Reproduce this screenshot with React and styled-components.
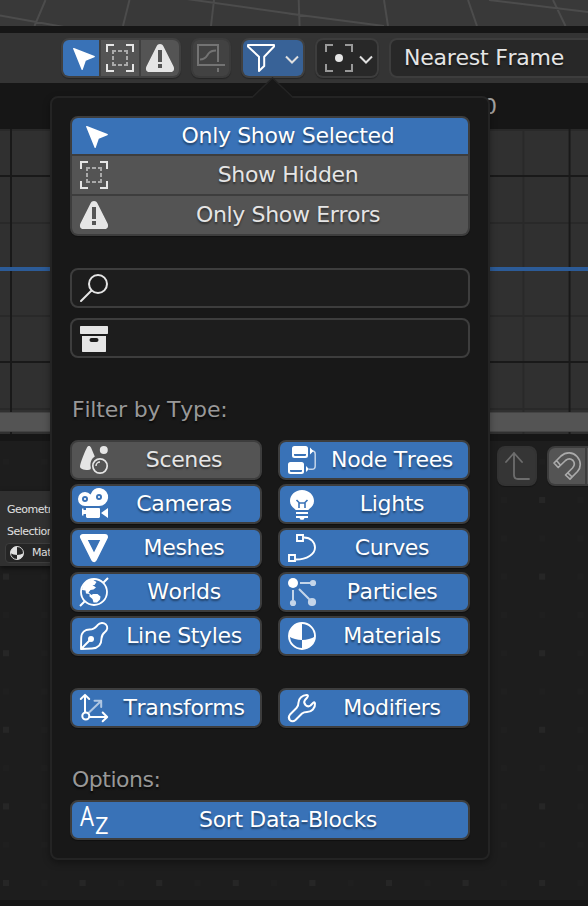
import styled, { createGlobalStyle } from "styled-components";

const GlobalStyle = createGlobalStyle`
  * {
    box-sizing: border-box;
  }
  body {
    margin: 0;
    background: #1d1d1d;
    font-family: "DejaVu Sans", sans-serif;
    font-size: 22px;
    font-kerning: none;
    letter-spacing: -0.35px;
    overflow: hidden;
  }
`

const Page = styled.div`
  position: relative;
  display: flex;
  flex-direction: column;
  width: 588px;
  height: 906px;
  overflow: hidden;
  background: #161616;
`

const Viewport = styled.div`
  height: 26px;
  margin-bottom: 7px;
  background: #393939;
  overflow: hidden;
  svg {
    display: block;
  }
`

const Header = styled.div`
  display: flex;
  align-items: flex-start;
  height: 50px;
  padding: 5px 0 0 61px;
  background: #343434;
`

const Ruler = styled.div`
  height: 46px;
  padding: 10px 0 0 483px;
  background: #161616;
  color: #a3a3a3;
  line-height: 28px;
`

const Graph = styled.div`
  display: flex;
  flex-direction: column;
  justify-content: space-between;
  height: 305px;
  margin-bottom: 7px;
  padding: 138px 0 2px;
  background-color: #303030;
  background-image:
    linear-gradient(#191919 2px, transparent 2px),
    linear-gradient(90deg, #191919 2px, transparent 2px),
    linear-gradient(#292929 2px, transparent 2px),
    linear-gradient(90deg, #292929 2px, transparent 2px);
  background-size: 100% 93px, 93.1px 100%, 100% 93px, 93.1px 100%;
  background-position: 0 46px, 10px 0, 0 0, 57px 0;
`

const Playline = styled.div`
  height: 4px;
  background: #2c5b97;
`

const Scrollbar = styled.div`
  height: 20px;
  border: solid #444;
  border-width: 1px 0;
  background: #545454;
`

const NodeEditor = styled.div`
  display: flex;
  justify-content: space-between;
  align-items: flex-start;
  height: 459px;
  padding-top: 5px;
  background-color: #1d1d1d;
  background-image:
    conic-gradient(from 90deg at 70.6px 70.6px, #262626 90deg, transparent 0),
    conic-gradient(from 90deg at 32.3px 32.3px, #1f1f1f 90deg, transparent 0);
  background-size: 76.6px 76.6px, 38.3px 38.3px;
  background-position: 9px 62px, 9px 62px;
`

const NodeCard = styled.div`
  width: 120px;
  height: 75px;
  margin-top: 45px;
  padding: 8px 0 0 5px;
  background: #303030;
  box-shadow: 0 2px 5px rgba(0, 0, 0, 0.5);
  color: #e0e0e0;
  font-size: 11px;
  line-height: 22px;
  letter-spacing: -0.5px;
  white-space: nowrap;
`

const NodeText = styled.div`
  padding-left: 2px;
`

const NodeField = styled.div`
  display: flex;
  align-items: center;
  gap: 8px;
  height: 20px;
  padding-left: 4px;
  border: 1px solid #3d3d3d;
  border-radius: 4px;
  background: #252525;
`

const NodeTools = styled.div`
  display: flex;
  align-items: flex-start;
  gap: 10px;
  width: 91px;
`

const Group = styled.div`
  display: flex;
  flex: none;
  flex-direction: ${(p) => (p.$column ? "column" : "row")};
  gap: 2px;
  margin-right: ${(p) => p.$after || 0}px;
  border: 2px solid ${(p) => p.$border || "#3d3d3d"};
  border-radius: 8px;
  background: ${(p) => p.$border || "#3d3d3d"};
  box-shadow: 0 1px 1px rgba(0, 0, 0, 0.3);
  overflow: hidden;
`

const Segment = styled.div`
  display: flex;
  align-items: center;
  justify-content: center;
  gap: ${(p) => p.$gap || 10}px;
  width: ${(p) => p.$width}px;
  height: 36px;
  padding-left: ${(p) => p.$indent || 0}px;
  background: ${(p) => p.$bg || "#545454"};
  color: ${(p) => p.$color || "#e5e5e5"};
`

const FrameSelect = styled.div`
  flex: none;
  width: 240px;
  height: 40px;
  padding-left: 13px;
  border: 2px solid #3d3d3d;
  border-radius: 8px;
  background: #282828;
  color: #e5e5e5;
  line-height: 36px;
  letter-spacing: -0.25px;
  text-shadow: 0 2px 2px rgba(0, 0, 0, 0.5);
`

const Popover = styled.div`
  position: absolute;
  left: 50px;
  top: 96px;
  width: 440px;
  height: 764px;
  padding: 18px;
  border: 2px solid #242424;
  border-radius: 8px;
  background: #181818;
  box-shadow: 0 3px 7px rgba(0, 0, 0, 0.35);
`

const Arrow = styled.svg`
  position: absolute;
  left: 200px;
  top: -21px;
`

const Row = styled.div`
  display: flex;
  align-items: center;
  width: 100%;
  height: ${(p) => p.$height || 38}px;
  padding-left: 8px;
  background: ${(p) => (p.$on ? "#3972b7" : "#545454")};
  color: ${(p) => (p.$on ? "#fff" : "#e5e5e5")};
`

const Toggle = styled(Row)`
  height: 40px;
  border: 2px solid #3d3d3d;
  border-radius: 8px;
  box-shadow: 0 1px 1px rgba(0, 0, 0, 0.4);
`

const Caption = styled.span`
  flex: 1;
  text-align: center;
  line-height: 36px;
  white-space: nowrap;
  text-shadow: 0 2px 2px rgba(0, 0, 0, 0.45);
`

const Field = styled.div`
  display: flex;
  align-items: center;
  height: 40px;
  margin-top: ${(p) => p.$before}px;
  padding-left: 8px;
  border: 2px solid #3d3d3d;
  border-radius: 8px;
  background: #1d1d1d;
  color: #e5e5e5;
`

const Label = styled.div`
  height: 40px;
  margin-top: 32px;
  padding-left: 2px;
  color: #989898;
  line-height: 40px;
  letter-spacing: ${(p) => p.$spacing || 0}px;
  text-shadow: 0 2px 2px rgba(0, 0, 0, 0.7);
`

const Grid = styled.div`
  display: grid;
  grid-template-columns: 1fr 1fr;
  gap: 4px 16px;
  margin-top: ${(p) => p.$before}px;
`

const IconSvg = styled.svg`
  flex: none;
  display: block;
  overflow: visible;
`

const Icon = ({ children, size = 28, line }) => (
  <IconSvg
    width={size}
    height={size}
    viewBox="0 0 28 28"
    fill={line ? "none" : "currentColor"}
    stroke={line ? "currentColor" : "none"}
    strokeWidth="2"
    strokeLinecap={line === "round" ? "round" : "butt"}
    strokeLinejoin={line === "round" ? "round" : "miter"}
  >
    {children}
  </IconSvg>
)

const CursorIcon = () => (
  <Icon>
    <path d="M6 4.6Q6 3.7 7 4L27.6 12Q28.4 12.8 27.4 13.3L18.8 16.8L15.8 25.6Q15.1 26.6 14.5 25.6Z" />
  </Icon>
)

const corners = "M8 1H1V8M20 1H27V8M8 27H1V20M20 27H27V20"

const HiddenIcon = () => (
  <Icon line>
    <path d={corners} />
    <path d="M6 7H22M6 21H22M7 6V22M21 6V22" strokeDasharray="4 2" opacity=".6" />
  </Icon>
)

const ErrorIcon = () => (
  <Icon>
    <path
      fillRule="evenodd"
      d="M14 0C15.500 0 16.700 .8 17.400 2.200L27.600 22.500C28.800 25.500 27.500 28 25 28H3C.5 28-.8 25.500 .4 22.500L10.600 2.200C11.300 .8 12.500 0 14 0ZM12 6V18H16V6ZM12 20V24H16V20Z"
    />
  </Icon>
)

const NormalizeIcon = () => (
  <Icon line>
    <path d="M21 18V1H1V21H28M21 24V28M3 15.500C9 15.500 9.500 12 11.500 9.500C13.500 7 15 6.500 19 6.500" />
  </Icon>
)

const FunnelIcon = () => (
  <Icon line="round">
    <path d="M1 1H27V2.500L17.200 12.800V22L12 27V12.800L1 2.500Z" />
  </Icon>
)

const PivotIcon = () => (
  <Icon line>
    <path d={corners} opacity=".6" />
    <circle cx="14" cy="14" r="4" fill="currentColor" stroke="none" />
  </Icon>
)

const Chevron = () => (
  <IconSvg width="14" height="9" viewBox="0 0 14 9" fill="none" stroke="#e0e0e0" strokeWidth="2">
    <path d="M1 2.500L7 8.500L13 2.500" />
  </IconSvg>
)

const SearchIcon = () => (
  <Icon line="round">
    <circle cx="18" cy="10" r="9" />
    <path d="M11.500 16.500L1 27" />
  </Icon>
)

const ArchiveIcon = () => (
  <Icon>
    <path
      fillRule="evenodd"
      d="M.6 2H27.400L28 2.600V9.400L27.400 10H.6L0 9.400V2.600ZM2 12H26V27.500L25.500 28H2.500L2 27.500ZM11.500 14A2 2 0 0 0 11.500 18H16.500A2 2 0 0 0 16.500 14Z"
    />
  </Icon>
)

const SceneIcon = () => (
  <Icon>
    <path d="M9 0C10 0 10.500 .6 11 1.500L14.800 10.500C11.200 12.800 9.800 17 10.800 21.500C11 23.300 10 24 8 24C3 24 0 22.500 0 20.500C0 17.500 5.500 4 7 1.500C7.500 .5 8 0 9 0Z" />
    <circle cx="23.800" cy="4" r="4" />
    <circle cx="20" cy="20" r="7.200" fill="none" stroke="currentColor" strokeWidth="1.700" />
    <path d="M16 20A4 4 0 0 1 20 16" fill="none" stroke="currentColor" strokeWidth="1.500" />
  </Icon>
)

const CameraIcon = () => (
  <Icon>
    <path
      fillRule="evenodd"
      d="M5 2A7 7 0 0 1 10.500 4.500A9 9 0 1 1 19 16H5A7 7 0 0 1 5 2ZM5 6A3 3 0 0 0 5 12A3 3 0 0 0 5 6ZM19 4A3 3 0 0 0 19 10A3 3 0 0 0 19 4Z"
    />
    <circle cx="5" cy="9" r="1.100" />
    <circle cx="19" cy="7" r="1.100" />
    <path d="M7 18H19Q20 18 20 19V27L19 28H7L6 27V24H3.500V25.500H2V18.500H3.500V20H6V18ZM28 18V28L21 23Z" />
  </Icon>
)

const MeshIcon = () => (
  <Icon line="round">
    <path d="M3 3H25L14 25Z" strokeWidth="6" />
  </Icon>
)

const WorldIcon = () => (
  <Icon>
    <circle cx="14" cy="14" r="13" fill="none" stroke="currentColor" strokeWidth="1.800" />
    <path d="M0 28L4.500 23.500M23.500 4.500L28 0" stroke="currentColor" strokeWidth="2" />
    <path d="M2.500 9C5 3.500 8 2 13 1.800L16.500 4L14.500 7H12.500L16 9.500L13.500 11.500L10.500 12L8.500 14.500L11.500 17L13 16H17.500L20.500 18.500L20 21.500L17 24.500H13.500L12.500 21L9.500 18.500V16L6 15.500L5.500 12.500L2 12Z" />
  </Icon>
)

const PenIcon = () => (
  <Icon line="round">
    <path d="M1 27L1.200 16C1.300 10 5.500 7.500 9.500 7.500C14 7.500 15.500 5.500 17.500 3.200C20 .5 23.500 .2 25.800 2.400C28.200 5 27.500 8 25 10C22.500 12 21.500 13.500 21.500 16.500C21.500 23 18 26.200 12 26.500ZM1 27L10 18" strokeWidth="1.900" />
    <circle cx="11" cy="17" r="3" fill="currentColor" stroke="none" />
  </Icon>
)

const NodeTreeIcon = () => (
  <Icon>
    <path
      fillRule="evenodd"
      d="M6.500 0H17.500Q20 0 20 2.500V9.500Q20 12 17.500 12H6.500Q4 12 4 9.500V2.500Q4 0 6.500 0ZM6 8V9Q6 10 7 10H17Q18 10 18 9V8ZM2.500 16H13.500Q16 16 16 18.500V25.500Q16 28 13.500 28H2.500Q0 28 0 25.500V18.500Q0 16 2.500 16ZM2 24V25Q2 26 3 26H13Q14 26 14 25V24Z"
    />
    <path d="M22 1.500L25.500 5L22 8.500ZM18 20L21 23L18 26Z" />
    <path d="M24.500 5Q27.200 5 27.200 8V20Q27.200 23.300 24 23.300H21" fill="none" stroke="currentColor" strokeWidth="1.500" opacity=".7" />
  </Icon>
)

const LightIcon = () => (
  <Icon>
    <path d="M14 0C21 0 26 5 26 11C26 14.500 24 17 21.500 18.800Q20.500 20 20 20H8Q7.500 20 6.500 18.800C4 17 2 14.500 2 11C2 5 7 0 14 0Z" />
    <path d="M8.500 10L11 12.500V18M19.500 10L17 12.500V18M10.500 13H17.500" fill="none" stroke="#3972b7" strokeWidth="1.600" />
    <path d="M8 22H20V24H8ZM8 26H20V28H16.500L15.500 29.800H12.500L11.500 28H8Z" />
  </Icon>
)

const CurveIcon = () => (
  <Icon line>
    <path d="M9 1H15V7H9ZM1 21H7V27H1ZM16 3.500C23 3.500 27 8.500 27 13.500C27 20 19 25.500 8 25.500" strokeWidth="1.900" />
  </Icon>
)

const ParticleIcon = () => (
  <Icon>
    <circle cx="5" cy="5" r="5" />
    <g opacity=".7">
      <circle cx="25" cy="5" r="3.100" />
      <circle cx="5" cy="25" r="3.100" />
      <circle cx="24" cy="24" r="4.100" />
      <path d="M12 4H22V6H12ZM4 12H6V22H4ZM11.700 10.300L22 20.500L20.500 22L10.300 11.700Z" />
    </g>
  </Icon>
)

const MaterialIcon = ({ size }) => (
  <Icon size={size}>
    <circle cx="14" cy="14" r="13" fill="none" stroke="currentColor" strokeWidth="1.900" />
    <path d="M14 1V18Q6.500 17.800 1 14.500A13 13 0 0 1 14 1ZM14 18Q21.500 17.800 27 14.500A13 13 0 0 1 14 27Z" />
  </Icon>
)

const TransformIcon = () => (
  <Icon line="round">
    <path d="M5 18V1M.8 5L5 .9L9.200 5M9.500 23H27M22.700 18.500L27.200 23L22.700 27.300" />
    <circle cx="5.800" cy="22" r="3.500" />
    <path d="M9 18.500L21 7M14.500 6.800H21.200V13" opacity=".6" />
  </Icon>
)

const WrenchIcon = () => (
  <Icon line="round">
    <path d="M18.500 1C14.500 1 10.500 4.500 10.500 8.500C10.500 11.500 10 12.500 8.500 14L2 20.500C.5 22.500 .5 24.500 1.800 26C3.500 27.600 5.800 27.500 7.500 26L14 19.500C15.500 18.300 16.500 18 19 18C23.500 18 27.500 14 27 9.500C26.800 8 26 8 25 9L22.500 11.500C20.800 12.800 19 12.500 17.500 11C15.800 9 15.800 7.500 17 6L19.200 3.500C20.500 2 20 1 18.500 1Z" />
  </Icon>
)

const SortIcon = () => (
  <Icon>
    <g fontFamily="Open Sans, sans-serif" letterSpacing="0">
      <text x="0" y="20" fontSize="28" textLength="14" lengthAdjust="spacingAndGlyphs">A</text>
      <text x="15" y="28" fontSize="24" textLength="13.500" lengthAdjust="spacingAndGlyphs">Z</text>
    </g>
  </Icon>
)

const ParentIcon = () => (
  <Icon line="round">
    <path d="M3 10L11 1L19 10M11 1V23Q11 27 15 27H26" strokeWidth="1.800" />
  </Icon>
)

const MagnetIcon = () => (
  <Icon line="round">
    <path d="M1 11L8 4C13-.5 20 0 24 4.500C28.500 9.500 28 15.500 24.500 19.500L17 27.200L12.500 23L19.500 16C21.500 13.800 22 11 20 8.500C17.800 6.500 15 6.500 12.500 8.500L5.200 15.500ZM3.500 8.500L7.500 13.200M14.800 20.800L19.200 25" strokeWidth="1.700" />
  </Icon>
)

const types = [
  { name: "Scenes", icon: SceneIcon, off: true },
  { name: "Node Trees", icon: NodeTreeIcon },
  { name: "Cameras", icon: CameraIcon },
  { name: "Lights", icon: LightIcon },
  { name: "Meshes", icon: MeshIcon },
  { name: "Curves", icon: CurveIcon },
  { name: "Worlds", icon: WorldIcon },
  { name: "Particles", icon: ParticleIcon },
  { name: "Line Styles", icon: PenIcon },
  { name: "Materials", icon: MaterialIcon },
]

const extras = [
  { name: "Transforms", icon: TransformIcon },
  { name: "Modifiers", icon: WrenchIcon },
]

const ToggleGrid = ({ items, before }) => (
  <Grid $before={before}>
    {items.map(({ name, icon: Glyph, off }) => (
      <Toggle key={name} $on={!off}>
        <Glyph />
        <Caption>{name}</Caption>
      </Toggle>
    ))}
  </Grid>
)

const FilterPopover = () => (
  <Popover>
    <Arrow width="42" height="24" viewBox="0 0 42 24">
      <path d="M0 24L0 21L20.500 1L41 21V24Z" fill="#181818" />
      <path d="M0 20.500L20.500 1L41 20.500" fill="none" stroke="#242424" strokeWidth="1.500" />
    </Arrow>
    <Group $column>
      <Row $on $height={36}>
        <CursorIcon />
        <Caption>Only Show Selected</Caption>
      </Row>
      <Row>
        <HiddenIcon />
        <Caption>Show Hidden</Caption>
      </Row>
      <Row>
        <ErrorIcon />
        <Caption>Only Show Errors</Caption>
      </Row>
    </Group>
    <Field $before={32}>
      <SearchIcon />
    </Field>
    <Field $before={10}>
      <ArchiveIcon />
    </Field>
    <Label $spacing={-0.2}>Filter by Type:</Label>
    <ToggleGrid items={types} before={10} />
    <ToggleGrid items={extras} before={32} />
    <Label $spacing={-0.5}>Options:</Label>
    <Toggle $on>
      <SortIcon />
      <Caption>Sort Data-Blocks</Caption>
    </Toggle>
  </Popover>
)

const App = () => {
  return (
    <Page>
      <GlobalStyle />
      <Viewport>
        <svg width="588" height="26" stroke="#4c4c4c" strokeWidth="2">
          <path d="M45.500 0L34.500 26M0 15.500L64 27M129.500 0L123 26M214 0L211 26M187-1L300 15M298.700 0L299.600 26M288 13.500L384 26M384 0L388 26M468 0L477 26M489 0L588 12M553 0L565.500 26" />
        </svg>
      </Viewport>
      <Header>
        <Group $after={10} $border="#404040">
          <Segment $width={36} $bg="#3972b7" $color="#fff"><CursorIcon /></Segment>
          <Segment $width={38}><HiddenIcon /></Segment>
          <Segment $width={38}><ErrorIcon /></Segment>
        </Group>
        <Group $after={10} $border="#3b3b3b">
          <Segment $width={36} $bg="#424242" $color="#737373"><NormalizeIcon /></Segment>
        </Group>
        <Group $after={10} $border="#404040">
          <Segment $width={60} $bg="#386297" $color="#fff"><FunnelIcon /><Chevron /></Segment>
        </Group>
        <Group $after={10}>
          <Segment $width={60} $bg="#282828" $gap={6} $indent={4}><PivotIcon /><Chevron /></Segment>
        </Group>
        <FrameSelect>Nearest Frame</FrameSelect>
      </Header>
      <Ruler>0</Ruler>
      <Graph>
        <Playline />
        <Scrollbar />
      </Graph>
      <NodeEditor>
        <NodeCard>
          <NodeText>Geometry</NodeText>
          <NodeText>Selection</NodeText>
          <NodeField>
            <MaterialIcon size={14} />
            Material
          </NodeField>
        </NodeCard>
        <NodeTools>
          <Group $border="#333">
            <Segment $width={36} $bg="#353535" $color="#6d6d6d"><ParentIcon /></Segment>
          </Group>
          <Group>
            <Segment $width={36} $color="#aaa"><MagnetIcon /></Segment>
            <Segment $width={36} />
          </Group>
        </NodeTools>
      </NodeEditor>
      <FilterPopover />
    </Page>
  )
}

export default App;
